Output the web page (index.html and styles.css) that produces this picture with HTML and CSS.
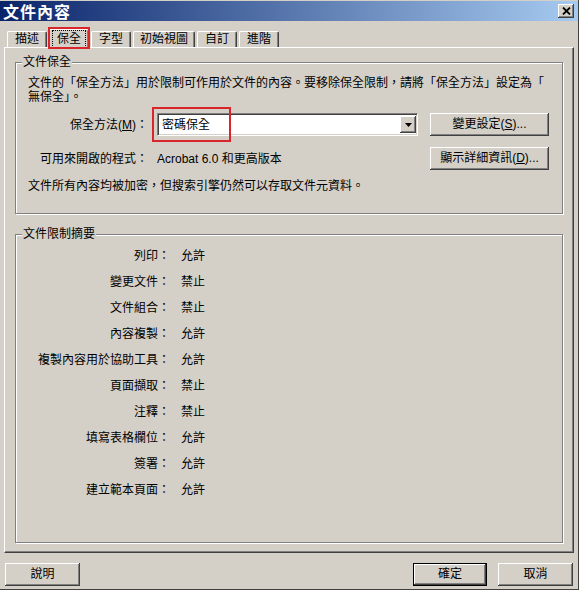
FILE: index.html
```html
<!DOCTYPE html>
<html lang="zh-Hant">
<head>
<meta charset="utf-8">
<title>文件內容</title>
<link rel="stylesheet" href="styles.css">
</head>
<body>
<div class="window">
  <div class="titlebar">
    <span class="title">文件內容</span>
    <span class="close"><svg width="9" height="8" viewBox="0 0 9 8"><path d="M1 0.5 L8 7.5 M8 0.5 L1 7.5" stroke="#000" stroke-width="1.8" fill="none"/></svg></span>
  </div>
  <div class="tabs">
    <div class="tab">描述</div>
    <div class="tab active"><span class="focus">保全</span><span class="mark"></span></div>
    <div class="tab">字型</div>
    <div class="tab">初始視圖</div>
    <div class="tab">自訂</div>
    <div class="tab">進階</div>
  </div>
  <div class="panel">
    <fieldset class="group g1">
      <legend>文件保全</legend>
      <p class="intro">文件的「保全方法」用於限制可作用於文件的內容。要移除保全限制，請將「保全方法」設定為「<br>無保全」。</p>
      <div class="row r1">
        <span class="lbl">保全方法(<u>M</u>)：</span>
        <div class="combo">
          <span class="combo-text">密碼保全</span>
          <span class="arrow"><svg width="7" height="4" viewBox="0 0 7 4"><path d="M0 0 H7 L3.5 4 Z" fill="#000"/></svg></span>
          <span class="mark combo-mark"></span>
        </div>
        <button class="btn side">變更設定(<u>S</u>)...</button>
      </div>
      <div class="row r2">
        <span class="lbl">可用來開啟的程式：</span>
        <span class="val">Acrobat 6.0 和更高版本</span>
        <button class="btn side push">顯示詳細資訊(<u>D</u>)...</button>
      </div>
      <p class="note">文件所有內容均被加密，但搜索引擎仍然可以存取文件元資料。</p>
    </fieldset>
    <fieldset class="group g2">
      <legend>文件限制摘要</legend>
      <div class="summary">
        <span class="k">列印：</span><span class="v">允許</span>
        <span class="k">變更文件：</span><span class="v">禁止</span>
        <span class="k">文件組合：</span><span class="v">禁止</span>
        <span class="k">內容複製：</span><span class="v">允許</span>
        <span class="k">複製內容用於協助工具：</span><span class="v">允許</span>
        <span class="k">頁面擷取：</span><span class="v">禁止</span>
        <span class="k">注釋：</span><span class="v">禁止</span>
        <span class="k">填寫表格欄位：</span><span class="v">允許</span>
        <span class="k">簽署：</span><span class="v">允許</span>
        <span class="k">建立範本頁面：</span><span class="v">允許</span>
      </div>
    </fieldset>
  </div>
  <div class="footer">
    <button class="btn foot">說明</button>
    <button class="btn foot default push">確定</button>
    <button class="btn foot">取消</button>
  </div>
</div>
</body>
</html>
```

FILE: styles.css
```css
* { box-sizing: border-box; }

body {
  margin: 0;
  background: #ffffff;
  color: #000;
  font: 12px/14px "Liberation Sans", "Noto Sans CJK TC", sans-serif;
}

.window {
  width: 579px;
  height: 590px;
  background: #d4d0c8;
  border-right: 1px solid #404040;
  border-bottom: 1px solid #404040;
  padding-top: 1px;
  display: flex;
  flex-direction: column;
}

.titlebar {
  height: 20px;
  flex: none;
  background: linear-gradient(to right, #0a246a, #a6caf0);
  display: flex;
  align-items: center;
  justify-content: space-between;
  padding: 0 4px 0 3px;
}

.title {
  color: #fff;
  font-family: "Noto Sans CJK TC", sans-serif;
  font-weight: 700;
  font-size: 16px;
  line-height: 18px;
  letter-spacing: 1px;
}

.close {
  width: 16px;
  height: 14px;
  background: #d4d0c8;
  box-shadow: inset -1px -1px #404040, inset 1px 1px #fff, inset -2px -2px #808080;
  display: flex;
  align-items: center;
  justify-content: center;
}

.close svg { display: block; }

.tabs {
  height: 18px;
  flex: none;
  margin-top: 8px;
  padding-left: 7px;
  display: flex;
  align-items: flex-end;
  gap: 2px;
  position: relative;
  z-index: 1;
}

.tab {
  height: 16px;
  min-width: 40px;
  padding: 0 6px;
  text-align: center;
  line-height: 15px;
  background: #d4d0c8;
  border-top: 1px solid #fff;
  border-left: 1px solid #fff;
  border-right: 1px solid #404040;
  box-shadow: inset -1px 0 #808080;
  border-radius: 2px 2px 0 0;
}

.tab.active {
  height: 19px;
  margin-bottom: -1px;
  position: relative;
  padding: 0 3px;
  display: flex;
  align-items: center;
  justify-content: center;
}

.focus {
  outline: 1px dotted #000;
  outline-offset: 0;
  padding: 1px 4px;
  line-height: 14px;
}

.mark {
  position: absolute;
  border: 2px solid #d8262a;
  pointer-events: none;
}

.tab .mark {
  left: -2px;
  right: -2px;
  top: -3px;
  bottom: -1px;
}

.panel {
  margin-left: 4px;
  width: 570px;
  height: 506px;
  flex: none;
  border: 1px solid;
  border-color: #fff #404040 #404040 #fff;
  box-shadow: inset -1px -1px #808080;
  padding: 7px 10px 9px 10px;
  display: flex;
  flex-direction: column;
}

.group {
  margin: 0;
  min-width: 0;
  border: 1px solid #808080;
  box-shadow: inset 1px 1px #fff, 1px 1px #fff;
  padding: 7px 13px 20px 12px;
}

.group legend {
  margin-left: -6px;
  padding: 0 1px;
  line-height: 14px;
  background: #d4d0c8;
}

.g2 {
  margin-top: 13px;
  flex: 1;
  padding-top: 2px;
  padding-bottom: 0;
}

.intro {
  margin: 0;
  white-space: nowrap;
}

.row {
  display: flex;
  align-items: center;
  height: 23px;
}

.r1 { margin-top: 9px; }
.r2 { margin-top: 11px; }

.lbl {
  width: 120px;
  flex: none;
  text-align: right;
}

.val { margin-left: 9px; }

.combo {
  margin-left: 9px;
  width: 261px;
  height: 23px;
  background: #fff;
  border: 1px solid;
  border-color: #808080 #fff #fff #808080;
  box-shadow: inset 1px 1px #404040, inset -1px -1px #d4d0c8;
  display: flex;
  align-items: center;
  justify-content: space-between;
  padding: 2px 1px 2px 4px;
  position: relative;
}

.combo-text { line-height: 14px; }

.arrow {
  width: 16px;
  height: 17px;
  background: #d4d0c8;
  box-shadow: inset -1px -1px #404040, inset 1px 1px #fff, inset -2px -2px #808080;
  display: flex;
  align-items: center;
  justify-content: center;
}

.arrow svg { display: block; }

.combo-mark {
  left: -6px;
  top: -7px;
  width: 79px;
  height: 35px;
}

.btn {
  font: inherit;
  color: #000;
  height: 23px;
  background: #d4d0c8;
  border: 0;
  padding: 0;
  box-shadow: inset -1px -1px #404040, inset 1px 1px #fff, inset -2px -2px #808080;
  line-height: 21px;
  text-align: center;
}

.btn u { text-decoration: underline; }

.side {
  width: 119px;
  margin-left: 12px;
}

.push { margin-left: auto; }

.note {
  margin: 9px 0 0;
}

.summary {
  display: grid;
  grid-template-columns: 142px auto;
  column-gap: 11px;
  grid-auto-rows: 26px;
  align-items: center;
}

.k { text-align: right; }

.footer {
  margin-top: 10px;
  padding: 0 5px;
  display: flex;
  gap: 11px;
}

.foot { width: 75px; }

.default {
  width: 74px;
  border: 1px solid #000;
  box-shadow: inset -1px -1px #404040, inset 1px 1px #fff, inset -2px -2px #808080;
}
```
